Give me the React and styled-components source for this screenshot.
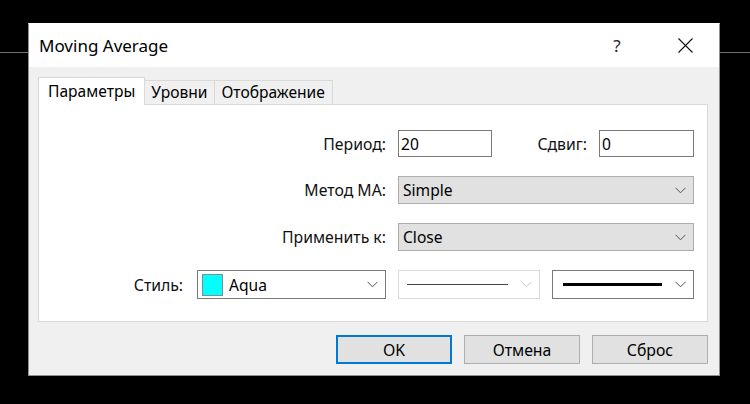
import React from 'react';
import styled, { createGlobalStyle } from 'styled-components';

const GlobalStyle = createGlobalStyle`
    body{
        margin: 0;
        background: #000;
        background-image: linear-gradient(#000 52px, #6b7177 52px, #6b7177 53px, #000 53px);
        font-family: "Noto Sans", "Open Sans", sans-serif;
    }
`;

function Chevron({ color }){
    return (
        <svg width="11" height="7" viewBox="0 0 11 7">
            <polyline points="0.5,0.8 5.5,5.8 10.5,0.8" fill="none" stroke={color || '#505050'} strokeWidth="1"/>
        </svg>
    );
}

function CloseIcon(){
    return (
        <svg width="15" height="15" viewBox="0 0 15 15">
            <path d="M0.5 0.5 L14.5 14.5 M14.5 0.5 L0.5 14.5" stroke="#111" strokeWidth="1.1" fill="none"/>
        </svg>
    );
}

export default function App(){
    return(
        <>
        <GlobalStyle/>
        <Page>
            <Dialog>
                <TitleBar>
                    <Title>Moving Average</Title>
                    <HelpButton>?</HelpButton>
                    <CloseButton><CloseIcon/></CloseButton>
                </TitleBar>
                <Body>
                    <Tabs>
                        <Tab $active>Параметры</Tab>
                        <Tab>Уровни</Tab>
                        <Tab>Отображение</Tab>
                    </Tabs>
                    <Panel>
                        <Row>
                            <Label>Период:</Label>
                            <Input $w={94}>20</Input>
                            <Group>
                                <Label>Сдвиг:</Label>
                                <Input $w={95}>0</Input>
                            </Group>
                        </Row>
                        <Row>
                            <Label>Метод MA:</Label>
                            <Combo $w={296} $flat>
                                <ComboText>Simple</ComboText>
                                <Chevron/>
                            </Combo>
                        </Row>
                        <Row>
                            <Label>Применить к:</Label>
                            <Combo $w={296} $flat>
                                <ComboText>Close</ComboText>
                                <Chevron/>
                            </Combo>
                        </Row>
                        <Row>
                            <Label $extra={2}>Стиль:</Label>
                            <Combo $w={189} $h={29}>
                                <Swatch/>
                                <ComboText>Aqua</ComboText>
                                <Chevron/>
                            </Combo>
                            <Combo $w={142} $h={29} $disabled $pad={8}>
                                <LineSample $w={101} $t={1} $c="#444"/>
                                <Chevron color="#c4c4c4"/>
                            </Combo>
                            <Combo $w={142} $h={29} $pad={10}>
                                <LineSample $w={99} $t={3} $c="#000"/>
                                <Chevron/>
                            </Combo>
                        </Row>
                    </Panel>
                    <Buttons>
                        <Button $default>OK</Button>
                        <Button>Отмена</Button>
                        <Button>Сброс</Button>
                    </Buttons>
                </Body>
            </Dialog>
        </Page>
        </>
    );
}

const Page = styled.div`
    width: 750px;
    height: 404px;
    box-sizing: border-box;
    padding: 23px 0 0 28px;
`;

const Dialog = styled.div`
    width: 692px;
    height: 353px;
    box-sizing: border-box;
    border: 1px solid #8f8f8f;
    border-top-color: #fff;
    background: #f0f0f0;
    display: flex;
    flex-direction: column;
`;

const TitleBar = styled.div`
    height: 43px;
    background: #fff;
    display: flex;
    align-items: center;
    padding-left: 10px;
    padding-right: 11px;
`;

const Title = styled.div`
    flex: 1;
    font-size: 17px;
    color: #000;
`;

const HelpButton = styled.div`
    width: 44px;
    text-align: center;
    font-size: 17px;
    color: #222;
    margin-right: 23px;
`;

const CloseButton = styled.div`
    width: 46px;
    height: 43px;
    display: flex;
    align-items: center;
    justify-content: center;
`;

const Body = styled.div`
    flex: 1;
    padding: 10px 11px 0 9px;
    display: flex;
    flex-direction: column;
`;

const Tabs = styled.div`
    display: flex;
    align-items: flex-end;
    height: 27px;
`;

const Tab = styled.div`
    position: relative;
    z-index: ${p => p.$active ? 1 : 0};
    box-sizing: border-box;
    height: ${p => p.$active ? '28px' : '24px'};
    margin-bottom: ${p => p.$active ? '-1px' : '0'};
    padding: ${p => p.$active ? '2px 9px 0 9px' : '0 7px 0 6px'};
    background: ${p => p.$active ? '#fff' : '#f0f0f0'};
    border: 1px solid #d9d9d9;
    border-bottom: none;
    margin-left: ${p => p.$active ? '0' : '-1px'};
    font-size: 15.6px;
    color: #000;
`;

const Panel = styled.div`
    height: 218px;
    box-sizing: border-box;
    background: #fff;
    border: 1px solid #d9d9d9;
    padding: 25px 13px 0 0;
    display: flex;
    flex-direction: column;
    gap: 19px;
`;

const Row = styled.div`
    display: flex;
    align-items: center;
    justify-content: flex-end;
    gap: 12px;
`;

const Group = styled.div`
    width: 190px;
    display: flex;
    align-items: center;
    justify-content: flex-end;
    gap: 12px;
`;

const Label = styled.div`
    font-size: 15.8px;
    color: #111;
    margin-right: ${p => p.$extra || 0}px;
`;

const Input = styled.div`
    width: ${p => p.$w}px;
    height: 27px;
    box-sizing: border-box;
    border: 1px solid #7a7a7a;
    background: #fff;
    padding: 0 2px;
    display: flex;
    align-items: center;
    font-size: 15.6px;
    color: #000;
`;

const Combo = styled.div`
    width: ${p => p.$w}px;
    height: ${p => p.$h || 28}px;
    box-sizing: border-box;
    border: 1px solid ${p => p.$disabled ? '#d9d9d9' : p.$flat ? '#adadad' : '#7a7a7a'};
    background: ${p => p.$flat ? '#e1e1e1' : '#fff'};
    display: flex;
    align-items: center;
    padding: 0 7px 0 ${p => p.$pad || 4}px;
    gap: 6px;
    svg{
        margin-left: auto;
    }
`;

const ComboText = styled.span`
    font-size: 15.6px;
    color: #000;
`;

const Swatch = styled.div`
    width: 19px;
    height: 20px;
    background: #00ffff;
    border: 1px solid #8a8a8a;
`;

const LineSample = styled.div`
    width: ${p => p.$w}px;
    height: ${p => p.$t}px;
    background: ${p => p.$c};
`;

const Buttons = styled.div`
    margin-top: 13px;
    display: flex;
    justify-content: flex-end;
    gap: 12px;
`;

const Button = styled.div`
    width: 116px;
    height: 29px;
    box-sizing: border-box;
    border: ${p => p.$default ? '2px solid #0078d7' : '1px solid #adadad'};
    background: #e1e1e1;
    display: flex;
    align-items: center;
    justify-content: center;
    font-size: 15.8px;
    color: #000;
`;
